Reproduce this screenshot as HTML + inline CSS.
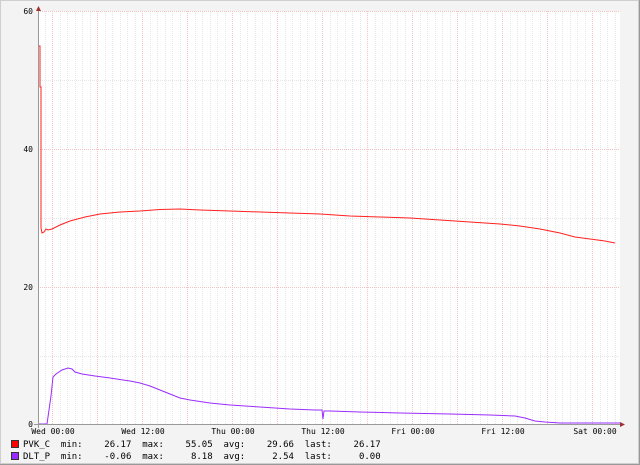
<!DOCTYPE html>
<html><head><style>
html,body{margin:0;padding:0;background:#f3f3f3}
svg{display:block}
text{font-family:"DejaVu Sans Mono","Liberation Mono",monospace;font-size:8px;fill:#000}
.lg{font-size:9px}
</style></head><body>
<svg width="640" height="465" viewBox="0 0 640 465" xmlns="http://www.w3.org/2000/svg">
<rect x="0" y="0" width="640" height="465" fill="#f3f3f3"/>
<rect x="0.5" y="0.5" width="638" height="463" fill="none" stroke="#cfcfcf"/>
<line x1="0" y1="464.5" x2="640" y2="464.5" stroke="#999"/>
<line x1="639.5" y1="0" x2="639.5" y2="465" stroke="#999"/>
<rect x="38" y="11" width="582" height="413" fill="#fff"/>
<g stroke="#e6e6e6" stroke-dasharray="1,1" stroke-width="1">
<path d="M45.5 11V424M60.5 11V424M67.5 11V424M75.5 11V424M82.5 11V424M90.5 11V424M105.5 11V424M112.5 11V424M120.5 11V424M127.5 11V424M135.5 11V424M150.5 11V424M157.5 11V424M165.5 11V424M172.5 11V424M180.5 11V424M195.5 11V424M202.5 11V424M210.5 11V424M217.5 11V424M225.5 11V424M240.5 11V424M247.5 11V424M255.5 11V424M262.5 11V424M270.5 11V424M285.5 11V424M292.5 11V424M300.5 11V424M307.5 11V424M315.5 11V424M330.5 11V424M337.5 11V424M345.5 11V424M352.5 11V424M360.5 11V424M375.5 11V424M382.5 11V424M390.5 11V424M397.5 11V424M405.5 11V424M420.5 11V424M427.5 11V424M435.5 11V424M442.5 11V424M450.5 11V424M465.5 11V424M472.5 11V424M480.5 11V424M487.5 11V424M495.5 11V424M510.5 11V424M517.5 11V424M525.5 11V424M532.5 11V424M540.5 11V424M555.5 11V424M562.5 11V424M570.5 11V424M577.5 11V424M585.5 11V424M600.5 11V424M607.5 11V424M615.5 11V424"/>
<path d="M38 80.5H620M38 218.5H620M38 356.5H620"/>
</g>
<g stroke="#f4c4c4" stroke-dasharray="1,1" stroke-width="1">
<path d="M52.5 11V424M97.5 11V424M142.5 11V424M187.5 11V424M232.5 11V424M277.5 11V424M322.5 11V424M367.5 11V424M412.5 11V424M457.5 11V424M502.5 11V424M547.5 11V424M592.5 11V424"/>
<path d="M38 11.5H620M38 149.5H620M38 287.5H620"/>
</g>
<polyline fill="none" stroke="#ff2020" stroke-width="1" points="39,46 40,46 40,87 41,87 41,228 42,233 44,232 46,229 48,230 52,229 60,225 70,221 85,217 100,214 120,212 140,211 160,209.5 180,209 200,210 230,211 260,212 290,213 320,214 350,216 380,217 410,218 440,220 470,222 500,224 520,226 540,229 560,233 575,237 590,239 605,241 615,243"/>
<polyline fill="none" stroke="#9a2cff" stroke-width="1" points="39,424 47,424 49,410 51,396 53,377 56,374 62,370 68,368 72,369 75,372 82,374 95,376 110,378 130,381 140,383 150,386 160,390 170,394 180,398 190,400 210,403 230,405 260,407 290,409 315,410 322,410 323,419 324,411 330,411 360,412 400,413 450,414 490,415 515,416 525,418 535,421 545,422 560,423 620,423"/>
<line x1="38.5" y1="8" x2="38.5" y2="428" stroke="#999"/>
<line x1="34" y1="424.5" x2="622" y2="424.5" stroke="#999"/>
<path d="M36 11 L38.5 6 L41 11Z" fill="#a03030"/>
<path d="M620 422 L625 424.5 L620 427Z" fill="#a03030"/>
<g text-anchor="end">
<text x="33" y="14">60</text><text x="33" y="152">40</text><text x="33" y="290">20</text><text x="33" y="427">0</text>
</g>
<g text-anchor="middle">
<text x="53" y="434">Wed 00:00</text><text x="143" y="434">Wed 12:00</text><text x="233" y="434">Thu 00:00</text><text x="323" y="434">Thu 12:00</text><text x="413" y="434">Fri 00:00</text><text x="503" y="434">Fri 12:00</text><text x="595" y="434">Sat 00:00</text>
</g>
<rect x="11.5" y="440.5" width="7" height="7" fill="#ff0000" stroke="#333"/>
<rect x="11.5" y="452.5" width="7" height="7" fill="#9a2cff" stroke="#333"/>
<text class="lg" x="23" y="447" xml:space="preserve">PVK_C  min:    26.17  max:    55.05  avg:    29.66  last:    26.17</text>
<text class="lg" x="23" y="459" xml:space="preserve">DLT_P  min:    -0.06  max:     8.18  avg:     2.54  last:     0.00</text>
</svg>
</body></html>
